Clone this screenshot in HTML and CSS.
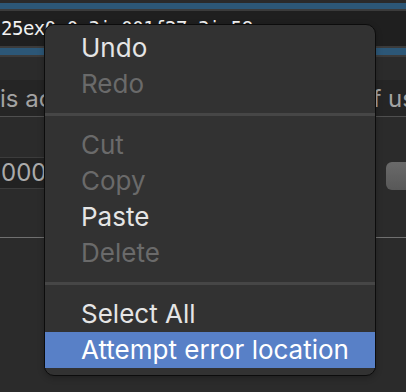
FILE: index.html
```html
<!DOCTYPE html>
<html lang="en">
<head>
    <meta charset="UTF-8">
    <meta name="viewport" content="width=device-width, initial-scale=1.0">
    <title>Editor - context menu</title>
    <link rel="stylesheet" href="styles.css">
</head>
<body>
    <div class="window">
        <div class="band-top"></div>
        <div class="band-blue"></div>
        <div class="rule"></div>
        <div class="code-row">25ex0e0 3i 001f27 3i 58:</div>
        <div class="rule"></div>
        <div class="band-blue tall"></div>
        <div class="rule"></div>

        <div class="panel">
            <div class="desc-row">
                <span class="desc-left">is account enabled on behalf</span>
                <span class="desc-right">of users</span>
            </div>

            <div class="field-row">
                <div class="field">0000000000</div>
                <div class="field-button"></div>
            </div>
        </div>
    </div>

    <!-- context menu over the editor -->
    <div class="context-menu">
        <div class="menu-item">Undo</div>
        <div class="menu-item disabled">Redo</div>
        <div class="menu-separator"></div>
        <div class="menu-item disabled">Cut</div>
        <div class="menu-item disabled">Copy</div>
        <div class="menu-item">Paste</div>
        <div class="menu-item disabled">Delete</div>
        <div class="menu-separator"></div>
        <div class="menu-item">Select All</div>
        <div class="menu-item active">Attempt error location</div>
    </div>
</body>
</html>
```

FILE: styles.css
```css
body {
    margin: 0;
    padding: 0;
    width: 406px;
    height: 392px;
    overflow: hidden;
    background: #2b2b2b;
    font-family: Inter, 'Liberation Sans', sans-serif;
}

.window {
    display: flex;
    flex-direction: column;
    height: 392px;
}

.band-top {
    height: 3px;
    background: #2a2a2a;
}

.band-blue {
    height: 6px;
    background: #2c5777;
}

.band-blue.tall {
    height: 7px;
}

.rule {
    height: 2px;
    background: #3b3b3b;
}

.code-row {
    height: 35px;
    line-height: 35px;
    padding-left: 1px;
    background: #1f1f1f;
    color: #f2f2f2;
    font-family: 'DejaVu Sans Mono', monospace;
    font-size: 19px;
    letter-spacing: -0.5px;
    white-space: nowrap;
    overflow: hidden;
}

.panel {
    flex: 1;
    padding-top: 23px;
    background: #2b2b2b;
}

.desc-row {
    display: flex;
    height: 36px;
    align-items: center;
    background: #252525;
    border-bottom: 1px solid #4f4f4f;
    color: #a3a3a3;
    font-size: 24px;
    white-space: nowrap;
    overflow: hidden;
}

.desc-left {
    flex: none;
    width: 358px;
    overflow: hidden;
}

.desc-right {
    flex: none;
}

.field-row {
    display: flex;
    margin-top: 40px;
    height: 80px;
    align-items: flex-start;
    border-bottom: 1px solid #707070;
}

.field {
    width: 320px;
    height: 30px;
    line-height: 30px;
    padding-left: 1px;
    background: #222222;
    border-top: 1px solid #3c3c3c;
    border-bottom: 1px solid #3c3c3c;
    color: #ababab;
    font-size: 24px;
    overflow: hidden;
    white-space: nowrap;
}

.field-button {
    margin-left: auto;
    margin-top: 5px;
    width: 26px;
    height: 28px;
    margin-right: -6px;
    border-radius: 6px;
    background: linear-gradient(#6a6a6a, #585858);
}

.context-menu {
    position: absolute;
    left: 44px;
    top: 24px;
    width: 332px;
    box-sizing: border-box;
    padding: 5px 0 7px;
    background: #323232;
    border: 1px solid #0c0c0c;
    border-radius: 10px;
    box-shadow: 0 2px 6px rgba(0, 0, 0, 0.25);
}

.menu-item {
    height: 36px;
    line-height: 36px;
    padding-left: 36px;
    color: #e5e5e5;
    font-size: 26px;
    white-space: nowrap;
}

.menu-item.disabled {
    color: #6a6a6a;
}

.menu-item.active {
    background: #5880c7;
    color: #ffffff;
}

.menu-separator {
    height: 3px;
    margin: 11px 0;
    background: #464646;
}
```
